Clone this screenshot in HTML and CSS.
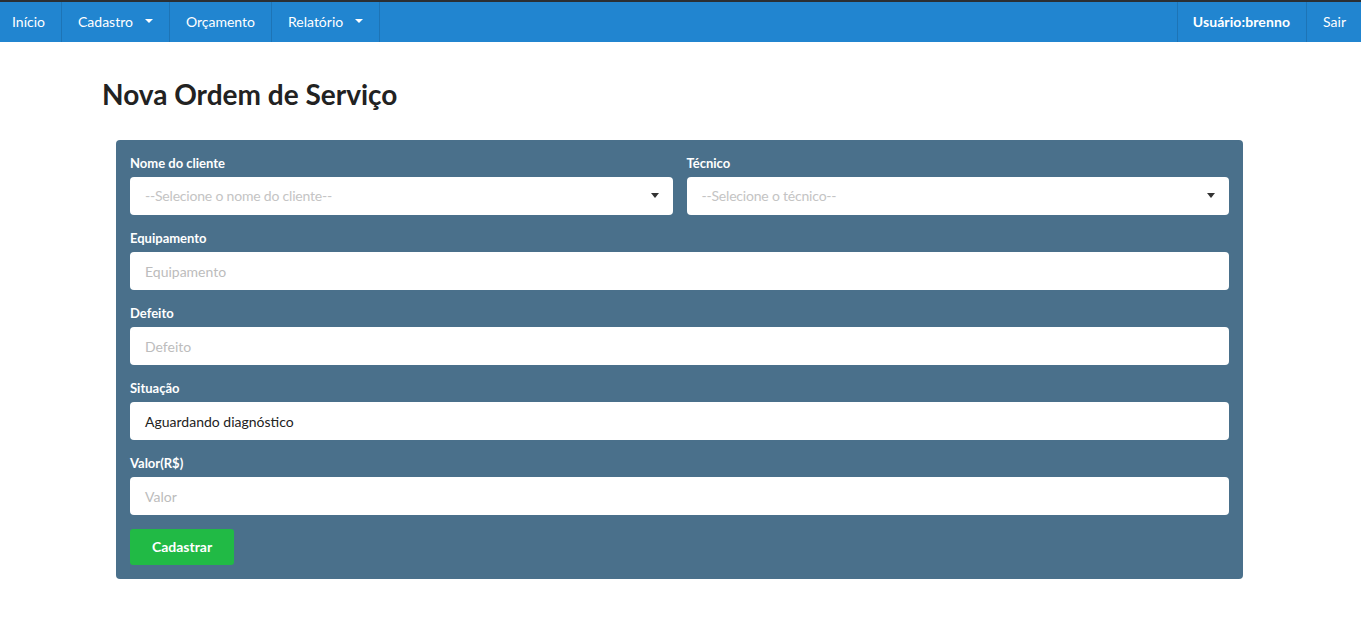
FILE: index.html
```html
<!DOCTYPE html>
<html lang="pt-BR">
<head>
<meta charset="utf-8">
<title>Nova Ordem de Serviço</title>
<link rel="stylesheet" href="styles.css">
</head>
<body>
<nav class="menu">
  <div class="menu-left">
    <a class="item first">Início</a>
    <a class="item">Cadastro <span class="caret"></span></a>
    <a class="item">Orçamento</a>
    <a class="item">Relatório <span class="caret"></span></a>
  </div>
  <div class="menu-right">
    <a class="item bold">Usuário:brenno</a>
    <a class="item last">Sair</a>
  </div>
</nav>
<main class="container">
  <h1 class="title">Nova Ordem de Serviço</h1>
  <form class="card">
    <div class="row two">
      <div class="field">
        <label>Nome do cliente</label>
        <div class="control select"><span class="placeholder">--Selecione o nome do cliente--</span><span class="dcaret"></span></div>
      </div>
      <div class="field">
        <label>Técnico</label>
        <div class="control select"><span class="placeholder">--Selecione o técnico--</span><span class="dcaret"></span></div>
      </div>
    </div>
    <div class="field">
      <label>Equipamento</label>
      <div class="control"><span class="placeholder">Equipamento</span></div>
    </div>
    <div class="field">
      <label>Defeito</label>
      <div class="control"><span class="placeholder">Defeito</span></div>
    </div>
    <div class="field">
      <label>Situação</label>
      <div class="control"><span class="value">Aguardando diagnóstico</span></div>
    </div>
    <div class="field">
      <label>Valor(R$)</label>
      <div class="control"><span class="placeholder">Valor</span></div>
    </div>
    <div class="actions">
      <span class="button">Cadastrar</span>
    </div>
  </form>
</main>
</body>
</html>
```
FILE: styles.css
```css
* { box-sizing: border-box; }
html, body { margin: 0; padding: 0; background: #fff; }
body { font-family: Lato, "Noto Sans", sans-serif; font-size: 14px; color: rgba(0,0,0,.87); }

.menu {
  display: flex;
  justify-content: space-between;
  height: 42px;
  background: #2185d0;
  border-top: 2px solid #2b2f33;
}
.menu-left, .menu-right { display: flex; }
.item {
  display: flex;
  align-items: center;
  padding: 0 16px 2px;
  color: #fff;
  font-size: 14px;
  border-right: 1px solid rgba(0,0,0,.12);
  white-space: nowrap;
}
.item.first { padding-left: 12px; }
.menu-right .item { border-right: none; border-left: 1px solid rgba(0,0,0,.12); }
.item.last { padding-right: 15px; }
.item.bold { font-weight: 700; letter-spacing: 0.1px; padding-left: 15px; }
.caret {
  display: inline-block;
  width: 0; height: 0;
  margin-left: 12px;
  border-left: 4px solid transparent;
  border-right: 4px solid transparent;
  border-top: 4px solid #fff;
}

.container { padding: 0 118px 0 102px; }
.title {
  margin: 0;
  padding-top: 35px;
  height: 98px;
  font-size: 28px;
  font-weight: 700;
  line-height: 34px;
  color: #222;
}
.card {
  margin: 0 0 0 14px;
  background: #4a708b;
  border-radius: 4px;
  padding: 14px;
  display: flex;
  flex-direction: column;
  gap: 14px;
}
.row.two { display: grid; grid-template-columns: 1fr 1fr; gap: 14px; }
.field { display: flex; flex-direction: column; gap: 5px; }
.field label {
  color: #fff;
  font-weight: 700;
  font-size: 13px;
  line-height: 18px;
  height: 18px;
}
.control {
  height: 38px;
  background: #fff;
  border-radius: 4px;
  display: flex;
  align-items: center;
  padding: 0 15px;
  font-size: 14px;
}
.select { justify-content: space-between; padding: 0 14px 1px 15px; }
.select .placeholder { letter-spacing: -0.2px; color: #c4c4c4; }
.placeholder { color: #bcbcbc; }
.value { color: #222; }
.dcaret {
  width: 0; height: 0;
  border-left: 4px solid transparent;
  border-right: 4px solid transparent;
  border-top: 5px solid #333;
}
.actions { display: flex; }
.button {
  display: inline-flex;
  align-items: center;
  justify-content: center;
  width: 104px;
  height: 36px;
  padding-bottom: 1px;
  background: #21ba45;
  color: #fff;
  font-weight: 700;
  font-size: 14px;
  border-radius: 3px;
}
```
